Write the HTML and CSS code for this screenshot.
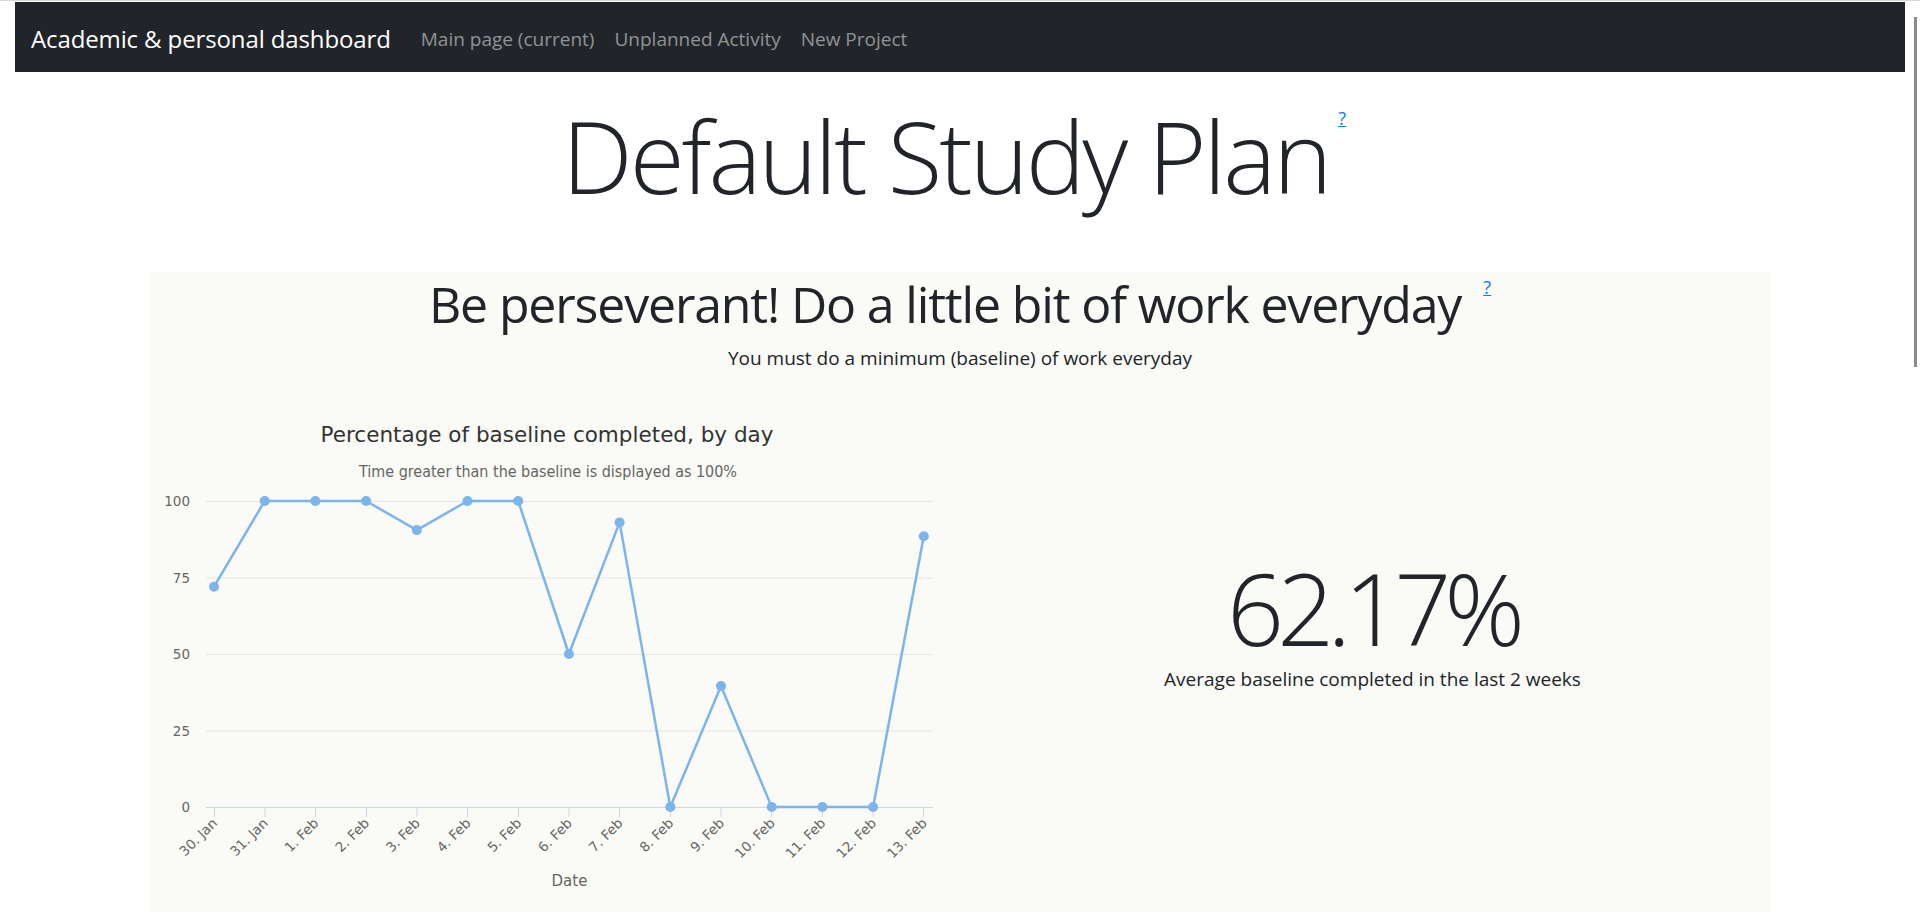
FILE: index.html
```html
<!DOCTYPE html>
<html lang="en">
<head>
<meta charset="utf-8">
<title>Default Study Plan</title>
<link rel="stylesheet" href="styles.css">
</head>
<body>
<nav class="navbar">
  <a class="brand" href="#">Academic &amp; personal dashboard</a>
  <ul class="nav-links">
    <li><a href="#">Main page (current)</a></li>
    <li><a href="#">Unplanned Activity</a></li>
    <li><a href="#">New Project</a></li>
  </ul>
</nav>

<h1 class="page-title">Default Study Plan<sup class="help help-title"><a href="#">?</a></sup></h1>

<section class="panel">
  <h2 class="panel-title">Be perseverant! Do a little bit of work everyday<sup class="help help-panel"><a href="#">?</a></sup></h2>
  <p class="panel-sub">You must do a minimum (baseline) of work everyday</p>

  <div class="panel-row">
    <div class="chart-col">
      <svg class="chart" width="810" height="520" viewBox="0 0 810 520">
        <text class="c-title" x="397" y="42" text-anchor="middle" textLength="453" lengthAdjust="spacingAndGlyphs">Percentage of baseline completed, by day</text>
        <text class="c-sub" x="398" y="77" text-anchor="middle" textLength="378" lengthAdjust="spacingAndGlyphs">Time greater than the baseline is displayed as 100%</text>

        <g class="grid">
          <line x1="56" y1="101.5" x2="783" y2="101.5"/>
          <line x1="56" y1="178" x2="783" y2="178"/>
          <line x1="56" y1="254.5" x2="783" y2="254.5"/>
          <line x1="56" y1="331" x2="783" y2="331"/>
        </g>

        <g class="ylab">
          <text x="40" y="106">100</text>
          <text x="40" y="182.5">75</text>
          <text x="40" y="259">50</text>
          <text x="40" y="335.5">25</text>
          <text x="40" y="412">0</text>
        </g>

        <line class="xaxis" x1="56" y1="407.5" x2="783" y2="407.5"/>
        <g class="ticks">
          <line x1="64.5" y1="407" x2="64.5" y2="417"/>
          <line x1="115" y1="407" x2="115" y2="417"/>
          <line x1="165.5" y1="407" x2="165.5" y2="417"/>
          <line x1="216.5" y1="407" x2="216.5" y2="417"/>
          <line x1="267" y1="407" x2="267" y2="417"/>
          <line x1="317.5" y1="407" x2="317.5" y2="417"/>
          <line x1="368.5" y1="407" x2="368.5" y2="417"/>
          <line x1="419" y1="407" x2="419" y2="417"/>
          <line x1="469.5" y1="407" x2="469.5" y2="417"/>
          <line x1="520.5" y1="407" x2="520.5" y2="417"/>
          <line x1="571" y1="407" x2="571" y2="417"/>
          <line x1="621.5" y1="407" x2="621.5" y2="417"/>
          <line x1="672.5" y1="407" x2="672.5" y2="417"/>
          <line x1="723" y1="407" x2="723" y2="417"/>
          <line x1="773.5" y1="407" x2="773.5" y2="417"/>
        </g>

        <g class="xlab">
          <text transform="translate(68,424) rotate(-45)">30. Jan</text>
          <text transform="translate(118.7,424) rotate(-45)">31. Jan</text>
          <text transform="translate(169.4,424) rotate(-45)">1. Feb</text>
          <text transform="translate(220.1,424) rotate(-45)">2. Feb</text>
          <text transform="translate(270.8,424) rotate(-45)">3. Feb</text>
          <text transform="translate(321.5,424) rotate(-45)">4. Feb</text>
          <text transform="translate(372.2,424) rotate(-45)">5. Feb</text>
          <text transform="translate(422.9,424) rotate(-45)">6. Feb</text>
          <text transform="translate(473.6,424) rotate(-45)">7. Feb</text>
          <text transform="translate(524.3,424) rotate(-45)">8. Feb</text>
          <text transform="translate(575,424) rotate(-45)">9. Feb</text>
          <text transform="translate(625.7,424) rotate(-45)">10. Feb</text>
          <text transform="translate(676.4,424) rotate(-45)">11. Feb</text>
          <text transform="translate(727.1,424) rotate(-45)">12. Feb</text>
          <text transform="translate(777.8,424) rotate(-45)">13. Feb</text>
        </g>

        <text class="c-axis" x="419.5" y="486" text-anchor="middle">Date</text>

        <polyline class="series" points="64,186.7 114.7,101 165.4,101 216.1,101 266.8,130.1 317.5,101 368.2,101 418.9,254 469.6,122.4 520.3,407 571,286.1 621.7,407 672.4,407 723.1,407 773.8,136.2"/>
        <g class="markers">
          <circle cx="64" cy="186.7" r="5"/>
          <circle cx="114.7" cy="101" r="5"/>
          <circle cx="165.4" cy="101" r="5"/>
          <circle cx="216.1" cy="101" r="5"/>
          <circle cx="266.8" cy="130.1" r="5"/>
          <circle cx="317.5" cy="101" r="5"/>
          <circle cx="368.2" cy="101" r="5"/>
          <circle cx="418.9" cy="254" r="5"/>
          <circle cx="469.6" cy="122.4" r="5"/>
          <circle cx="520.3" cy="407" r="5"/>
          <circle cx="571" cy="286.1" r="5"/>
          <circle cx="621.7" cy="407" r="5"/>
          <circle cx="672.4" cy="407" r="5"/>
          <circle cx="723.1" cy="407" r="5"/>
          <circle cx="773.8" cy="136.2" r="5"/>
        </g>
      </svg>
    </div>
    <div class="stat-col">
      <div class="stat-value">62.17%</div>
      <div class="stat-label">Average baseline completed in the last 2 weeks</div>
    </div>
  </div>
</section>

<div class="scroll-thumb"></div>
</body>
</html>
```

FILE: styles.css
```css
* { box-sizing: border-box; }

html, body {
  margin: 0;
  padding: 0;
  overflow: hidden;
}

body {
  height: 912px;
  background: #ffffff;
  color: #212529;
  font-family: "Open Sans", "Noto Sans", sans-serif;
  border-top: 1px solid #d9d9d9;
}

/* ---------- navbar ---------- */
.navbar {
  margin: 1px 15px 0;
  height: 70px;
  background: #212529;
  display: flex;
  align-items: center;
  padding: 5px 16px 0;
}

.brand {
  color: #ffffff;
  font-size: 24px;
  line-height: 1.2;
  letter-spacing: -0.12px;
  margin-right: 20px;
  text-decoration: none;
  white-space: nowrap;
}

.nav-links {
  display: flex;
  list-style: none;
  margin: 0;
  padding: 0;
}

.nav-links a {
  display: block;
  padding: 0 10px;
  color: rgba(255, 255, 255, 0.5);
  font-size: 19px;
  line-height: 1.5;
  text-decoration: none;
  white-space: nowrap;
}

/* ---------- page title ---------- */
.page-title {
  margin: 23px 0 0;
  text-align: center;
  font-size: 100px;
  font-weight: 300;
  line-height: 1.2;
  letter-spacing: -3px;
}

.help {
  font-size: 18px;
  font-weight: 400;
  line-height: 1;
  letter-spacing: 0;
}

.help a {
  color: #007bff;
  text-decoration: underline;
}

.help-title {
  vertical-align: 69px;
  margin-left: 9px;
  margin-right: 12px;
}

.help-panel {
  vertical-align: 29px;
  margin-left: 22px;
}

/* ---------- panel ---------- */
.panel {
  width: 1621px;
  margin: 57px auto 0;
  padding-top: 2px;
  background: #fafaf6;
  height: 700px;
}

.panel-title {
  margin: 0;
  text-align: center;
  font-size: 50px;
  font-weight: 400;
  line-height: 1.2;
  letter-spacing: -1.15px;
}

.panel-sub {
  margin: 9px 0 27px;
  text-align: center;
  font-size: 19px;
  line-height: 30px;
}

.panel-row {
  display: grid;
  grid-template-columns: 810px 811px;
}

.chart-col {
  height: 520px;
}

.chart {
  display: block;
  font-family: "DejaVu Sans", Verdana, sans-serif;
}

.c-title {
  font-size: 22px;
  fill: #333333;
}

.c-sub {
  font-size: 15px;
  fill: #666666;
}

.grid line {
  stroke: #e6e6e6;
  stroke-width: 1;
}

.ylab text {
  font-size: 13.5px;
  fill: #666666;
  text-anchor: end;
}

.xaxis {
  stroke: #ccd6eb;
  stroke-width: 1;
}

.ticks line {
  stroke: #ccd6eb;
  stroke-width: 1;
}

.xlab text {
  font-size: 13.5px;
  fill: #666666;
  text-anchor: end;
}

.c-axis {
  font-size: 15px;
  fill: #666666;
}

.series {
  fill: none;
  stroke: #7cb5ec;
  stroke-width: 2.5;
  stroke-linejoin: round;
}

.markers circle {
  fill: #7cb5ec;
}

/* ---------- stat ---------- */
.stat-col {
  padding: 157px 0 0 15px;
  text-align: center;
}

.stat-value {
  font-size: 100px;
  font-weight: 300;
  line-height: 1;
  letter-spacing: -7px;
}

.stat-label {
  margin-top: 7px;
  font-size: 19px;
  line-height: 30px;
}

/* overlay scrollbar thumb */
.scroll-thumb {
  position: fixed;
  top: 17px;
  right: 3px;
  width: 3px;
  height: 350px;
  background: #8a8a8a;
}
```
